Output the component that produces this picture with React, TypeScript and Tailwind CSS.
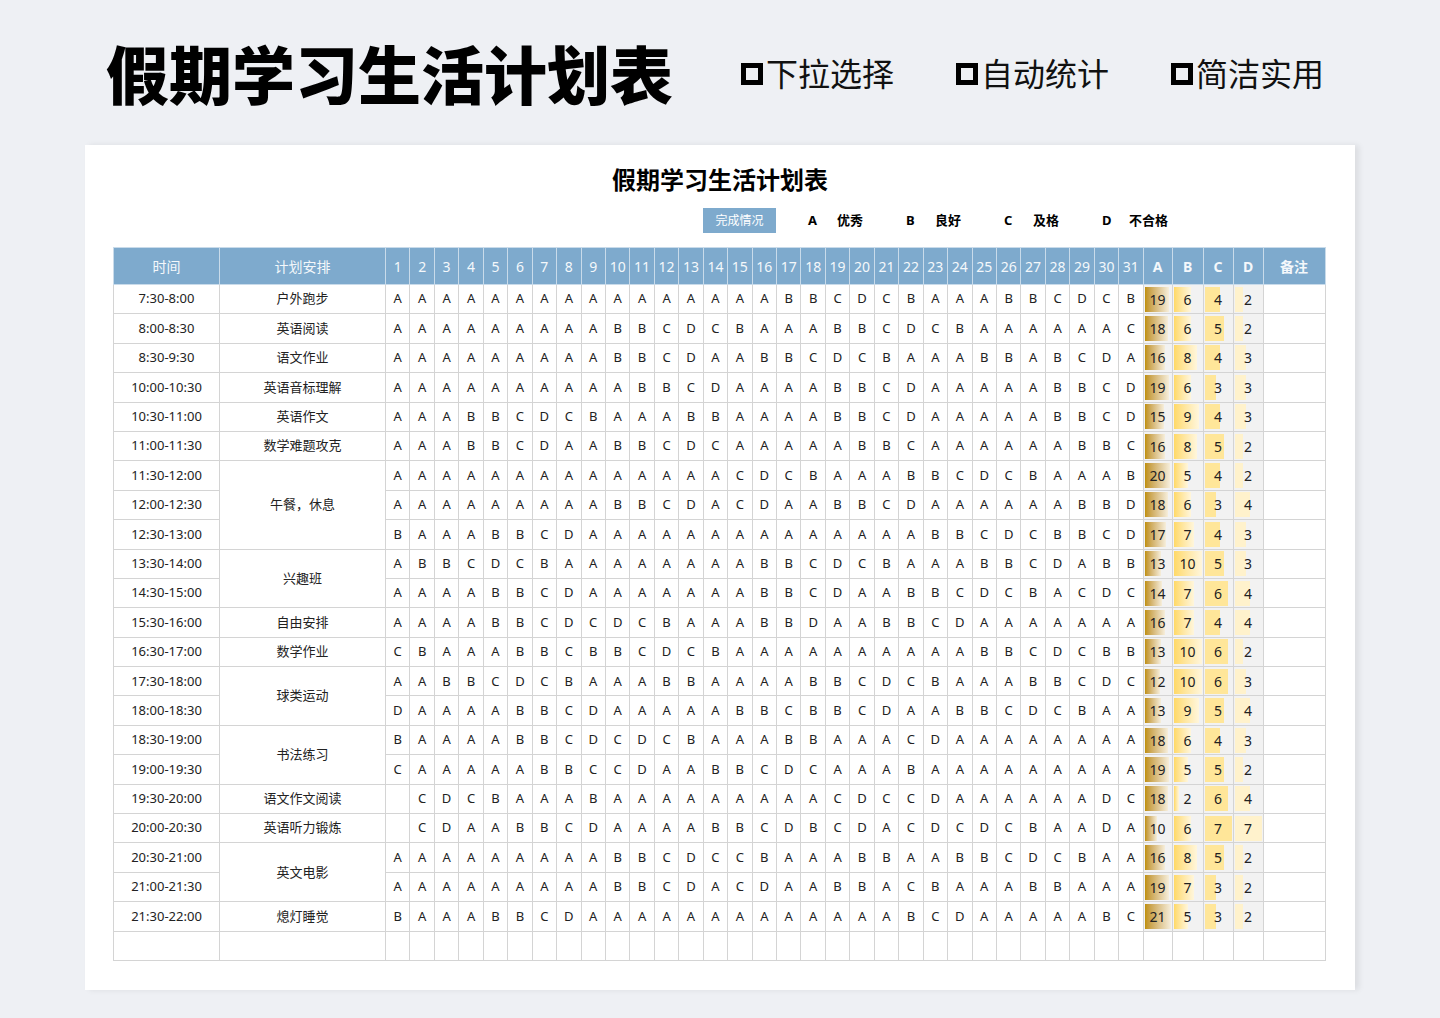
const rows: [string, string | null, number, string, number[]][] = [
  ["7:30-8:00", "户外跑步", 1, "AAAAAAAAAAAAAAAABBCDCBAAABBCDCB", [19, 6, 4, 2]],
  ["8:00-8:30", "英语阅读", 1, "AAAAAAAAABBCDCBAAABBCDCBAAAAAAC", [18, 6, 5, 2]],
  ["8:30-9:30", "语文作业", 1, "AAAAAAAAABBCDAABBCDCBAAABBABCDA", [16, 8, 4, 3]],
  ["10:00-10:30", "英语音标理解", 1, "AAAAAAAAAABBCDAAAABBCDAAAAABBCD", [19, 6, 3, 3]],
  ["10:30-11:00", "英语作文", 1, "AAABBCDCBAAABBAAAABBCDAAAAABBCD", [15, 9, 4, 3]],
  ["11:00-11:30", "数学难题攻克", 1, "AAABBCDAABBCDCAAAAABBCAAAAAABBC", [16, 8, 5, 2]],
  ["11:30-12:00", "午餐，休息", 3, "AAAAAAAAAAAAAACDCBAAABBCDCBAAAB", [20, 5, 4, 2]],
  ["12:00-12:30", null, 0, "AAAAAAAAABBCDACDAABBCDAAAAAABBD", [18, 6, 3, 4]],
  ["12:30-13:00", null, 0, "BAAABBCDAAAAAAAAAAAABBCDCBBCD", [17, 7, 4, 3]],
  ["13:30-14:00", "兴趣班", 2, "ABBCDCBAAAAAAAABBCDCBAAABBCDABB", [13, 10, 5, 3]],
  ["14:30-15:00", null, 0, "AAAABBCDAAAAAAABBCDAABBCDCBACDC", [14, 7, 6, 4]],
  ["15:30-16:00", "自由安排", 1, "AAAABBCDCDCBAAABBDAABBCDAAAAAAA", [16, 7, 4, 4]],
  ["16:30-17:00", "数学作业", 1, "CBAAABBCBBCDCBAAAAAAAAAABBCDCBB", [13, 10, 6, 2]],
  ["17:30-18:00", "球类运动", 2, "AABBCDCBAAABBAAAABBCDCBAAABBCDC", [12, 10, 6, 3]],
  ["18:00-18:30", null, 0, "DAAAABBCDAAAAABBCBBCDAABBCDCBAA", [13, 9, 5, 4]],
  ["18:30-19:00", "书法练习", 2, "BAAAABBCDCDCBAAABBAAACDAAAAAAAA", [18, 6, 4, 3]],
  ["19:00-19:30", null, 0, "CAAAAABBCCDAABBCDCAAABAAAAAAAAA", [19, 5, 5, 2]],
  ["19:30-20:00", "语文作文阅读", 1, " CDCBAAABAAAAAAAAACDCCDAAAAAADC", [18, 2, 6, 4]],
  ["20:00-20:30", "英语听力锻炼", 1, " CDAABBCDAAAABBCDBCDACDCDCBAADA", [10, 6, 7, 7]],
  ["20:30-21:00", "英文电影", 2, "AAAAAAAAABBCDCCBAAABBAABBCDCBAA", [16, 8, 5, 2]],
  ["21:00-21:30", null, 0, "AAAAAAAAABBCDACDAABBACBAAABBAAA", [19, 7, 3, 2]],
  ["21:30-22:00", "熄灯睡觉", 1, "BAAABBCDAAAAAAAAAAAABCDAAAAABC", [21, 5, 3, 2]],
];
rows[0][3] = "AAAAAAAAAAAAA" + "AAABBCDCBAAABBCDCB";
rows[8][3] = "BAAABBCD" + "AAAAAAAAAAAA" + "AABBCDCBBCD";
rows[21][3] = "BAAABBCD" + "AAAAAAAAAAAA" + "ABCDAAAAABC";

const maxes = [21, 10, 7, 7];
const bars = [
  "bg-gradient-to-r from-[#bf9000] to-[#f6eedb]",
  "bg-gradient-to-r from-[#ffd966] to-[#fff6dc]",
  "bg-[#ffe699]",
  "bg-[#fff2cc]",
];
const font = { fontFamily: '"Noto Sans","Noto Sans CJK SC",sans-serif' };
const days = Array.from({ length: 31 }, (_, i) => i + 1);
const bd = "border border-[#d4d4d4]";
const hd = "border border-[#c9dbea] bg-[#7eaacd] text-[#f4f8fb] font-normal";

export default function App() {
  return (
    <div className="min-h-[1018px] bg-[#eef0f4] pt-[28px]" style={font}>
      <div className="flex items-center pl-[106px] h-[92px]">
        <div className="text-[63px] font-black text-black leading-none">假期学习生活计划表</div>
        <div className="flex items-center ml-[68px] gap-[62px] text-[32px] text-[#111]">
          {["下拉选择", "自动统计", "简洁实用"].map((t) => (
            <div key={t} className="flex items-center">
              <span className="w-[22px] h-[22px] border-[5px] border-black mr-[3px]" />
              {t}
            </div>
          ))}
        </div>
      </div>
      <div className="ml-[85px] mt-[25px] w-[1270px] h-[845px] bg-white shadow-[4px_0_6px_rgba(0,0,0,0.08)] pt-[20px] px-[28px]">
        <div className="text-center text-[24px] font-bold text-black leading-[30px]">假期学习生活计划表</div>
        <div className="flex items-center h-[25px] mt-[13px] ml-[590px] text-[13px] font-bold text-black">
          <div className="w-[73px] h-[25px] bg-[#7eaacd] text-white font-normal text-[12px] flex items-center justify-center">完成情况</div>
          {[["A", "优秀"], ["B", "良好"], ["C", "及格"], ["D", "不合格"]].map(([a, b]) => (
            <div key={a} className="flex items-center ml-[32px] w-[66px] whitespace-nowrap">
              <span className="w-[29px]">{a}</span>
              <span>{b}</span>
            </div>
          ))}
        </div>
        <table className="mt-[14px] border-collapse table-fixed w-[1212px] text-[13px] text-[#222]">
          <colgroup>
            <col className="w-[106px]" />
            <col className="w-[166px]" />
            {days.map((d) => <col key={d} className="w-[24.45px]" />)}
            <col className="w-[29px]" />
            <col className="w-[31px]" />
            <col className="w-[30px]" />
            <col className="w-[30px]" />
            <col className="w-[62px]" />
          </colgroup>
          <thead>
            <tr className="h-[37px]">
              <th className={`${hd} text-[14px]`}>时间</th>
              <th className={`${hd} text-[14px]`}>计划安排</th>
              {days.map((d) => (
                <th key={d} className={`${hd} text-[14px] px-0`}>{d}</th>
              ))}
              {["A", "B", "C", "D"].map((x) => (
                <th key={x} className={`${hd} text-[14px] !font-bold`}>{x}</th>
              ))}
              <th className={`${hd} text-[14px] !font-bold`}>备注</th>
            </tr>
          </thead>
          <tbody>
            {rows.map(([time, plan, span, cells, counts]) => (
              <tr key={time} className="h-[29.4px]">
                <td className={`${bd} text-center`}>{time}</td>
                {plan !== null && (
                  <td className={`${bd} text-center`} rowSpan={span}>{plan}</td>
                )}
                {days.map((d, i) => (
                  <td key={d} className={`${bd} text-center p-0`}>{cells[i] && cells[i] !== " " ? cells[i] : ""}</td>
                ))}
                {counts.map((v, k) => (
                  <td key={k} className={`${bd} p-0 bg-[#f2f2f2]`}>
                    <div className="relative h-[27px]">
                      <div
                        className={`absolute left-[1px] top-[1px] bottom-[1px] ${bars[k]}`}
                        style={{ width: `${Math.min(100, (v / maxes[k]) * 96)}%` }}
                      />
                      <div className="relative text-center leading-[27px] text-[14px] text-[#222]">{v}</div>
                    </div>
                  </td>
                ))}
                <td className={bd}></td>
              </tr>
            ))}
            <tr className="h-[29.4px]">
              {Array.from({ length: 38 }, (_, i) => (
                <td key={i} className={bd}></td>
              ))}
            </tr>
          </tbody>
        </table>
      </div>
    </div>
  );
}
